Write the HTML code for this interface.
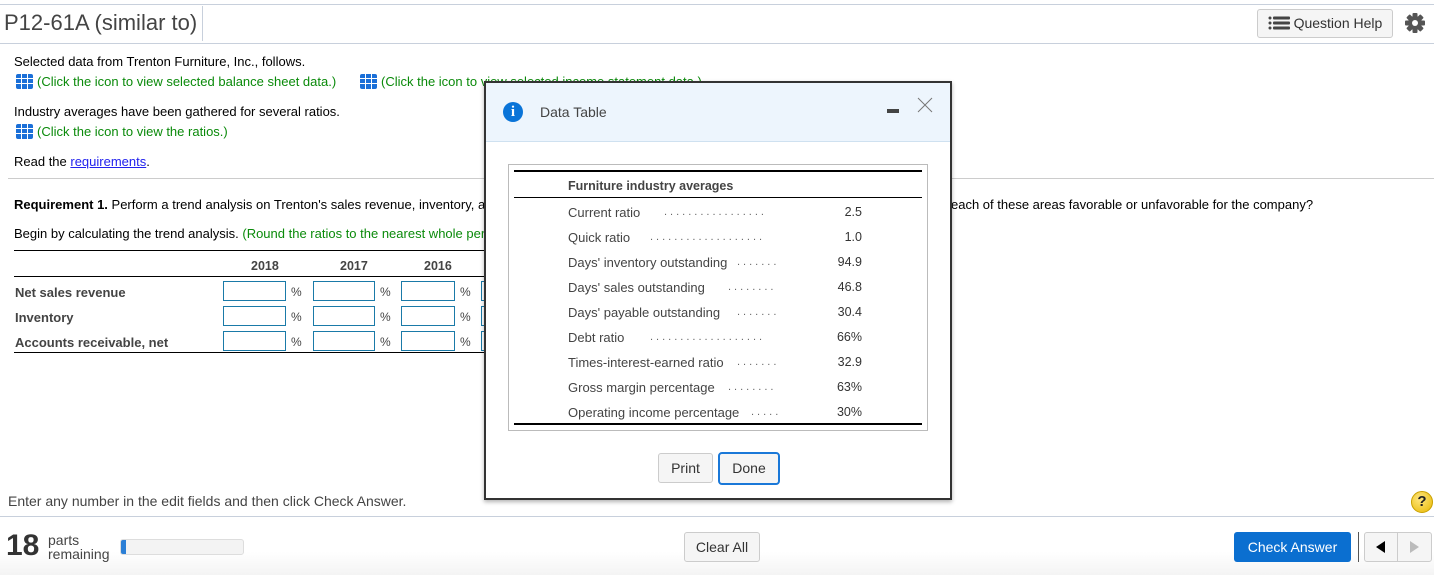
<!DOCTYPE html>
<html><head><meta charset="utf-8"><style>
*{margin:0;padding:0;box-sizing:border-box}
body{width:1434px;height:575px;overflow:hidden;background:#fff;font-family:"Liberation Sans",Arial,sans-serif;font-size:13px;color:#000;position:relative}
.a{position:absolute;white-space:nowrap}
.g{color:#0a8a0a}
.ic{display:inline-block;width:17px;height:15px;background:#1a6fd8;border-radius:2px;vertical-align:-3px;margin-right:4px;background-image:linear-gradient(90deg,transparent 5px,#fff 5px,#fff 6px,transparent 6px,transparent 11px,#fff 11px,#fff 12px,transparent 12px),linear-gradient(transparent 4px,#fff 4px,#fff 5px,transparent 5px,transparent 9px,#fff 9px,#fff 10px,transparent 10px)}
.inp{position:absolute;height:20px;border:1px solid #1a7aa8;background:#fff}
.pc{position:absolute;font-size:12px;color:#444}
.lbl{position:absolute;font-weight:bold;color:#444;font-size:13px}
.hr{position:absolute;background:#000}
.row{position:absolute;left:568px;color:#444;font-size:13px}
.dots{position:absolute;color:#666;letter-spacing:3px;font-size:11px}
.val{position:absolute;right:572px;color:#333;font-size:12.5px;text-align:right}
.btn{position:absolute;border:1px solid #ccc;border-radius:3px;background:#f5f5f5;color:#333;text-align:center;font-size:14px}
</style></head><body>
<div class="a" style="left:0;top:4px;width:1434px;height:1px;background:#c8d0dc"></div>
<div class="a" style="left:0;top:43px;width:1434px;height:1px;background:#c8d0dc"></div>
<div class="a" style="left:4px;top:10px;font-size:22px;color:#444">P12-61A (similar to)</div>
<div class="a" style="left:202px;top:6px;width:1px;height:35px;background:#c8d0dc"></div>
<div class="btn" style="left:1257px;top:9px;width:136px;height:29px;line-height:27px;font-size:14px">
<svg width="22" height="14" style="vertical-align:-2px" viewBox="0 0 22 14"><g fill="#444"><circle cx="2" cy="2" r="1.5"/><circle cx="2" cy="7" r="1.5"/><circle cx="2" cy="12" r="1.5"/><rect x="5" y="0.5" width="17" height="3" rx="1"/><rect x="5" y="5.5" width="17" height="3" rx="1"/><rect x="5" y="10.5" width="17" height="3" rx="1"/></g></svg> Question Help</div>
<svg class="a" style="left:1405px;top:13px" width="20" height="20" viewBox="0 0 20 20"><g fill="#555" transform="translate(10 10)"><rect x="-2.5" y="-10" width="5" height="20" rx="1"/><rect x="-2.5" y="-10" width="5" height="20" rx="1" transform="rotate(45)"/><rect x="-2.5" y="-10" width="5" height="20" rx="1" transform="rotate(90)"/><rect x="-2.5" y="-10" width="5" height="20" rx="1" transform="rotate(135)"/><circle r="7"/></g><circle cx="10" cy="10" r="3" fill="#fff"/></svg>

<div class="a" style="left:14px;top:54px">Selected data from Trenton Furniture, Inc., follows.</div>
<div class="a g" style="left:16px;top:74px"><span class="ic"></span>(Click the icon to view selected balance sheet data.)</div>
<div class="a g" style="left:360px;top:74px"><span class="ic"></span>(Click the icon to view selected income statement data.)</div>
<div class="a" style="left:14px;top:104px">Industry averages have been gathered for several ratios.</div>
<div class="a g" style="left:16px;top:124px"><span class="ic"></span>(Click the icon to view the ratios.)</div>
<div class="a" style="left:14px;top:154px">Read the <span style="color:#2222ee;text-decoration:underline">requirements</span>.</div>
<div class="a" style="left:8px;top:178px;width:1426px;height:1px;background:#ccc"></div>
<div class="a" style="left:14px;top:197px"><b>Requirement 1.</b> Perform a trend analysis on Trenton's sales revenue, inventory, and accounts receivable. Are the trends for</div>
<div class="a" style="left:951px;top:197px;background:#fff;padding-right:4px">each of these areas favorable or unfavorable for the company?</div>
<div class="a" style="left:14px;top:226px">Begin by calculating the trend analysis. <span class="g">(Round the ratios to the nearest whole percent.)</span></div>
<div class="hr" style="left:14px;top:250px;width:470px;height:1px"></div>
<div class="lbl" style="left:251px;top:259px;font-size:12.5px">2018</div>
<div class="lbl" style="left:340px;top:259px;font-size:12.5px">2017</div>
<div class="lbl" style="left:424px;top:259px;font-size:12.5px">2016</div>
<div class="hr" style="left:14px;top:276px;width:470px;height:1px"></div>
<div class="lbl" style="left:15px;top:285px">Net sales revenue</div>
<div class="lbl" style="left:15px;top:310px">Inventory</div>
<div class="lbl" style="left:15px;top:335px">Accounts receivable, net</div>
<div class="hr" style="left:14px;top:352px;width:470px;height:1px"></div>
<div class="inp" style="left:223px;top:281px;width:63px"></div><div class="pc" style="left:291px;top:285px">%</div>
<div class="inp" style="left:313px;top:281px;width:62px"></div><div class="pc" style="left:380px;top:285px">%</div>
<div class="inp" style="left:401px;top:281px;width:54px"></div><div class="pc" style="left:460px;top:285px">%</div>
<div class="inp" style="left:223px;top:306px;width:63px"></div><div class="pc" style="left:291px;top:310px">%</div>
<div class="inp" style="left:313px;top:306px;width:62px"></div><div class="pc" style="left:380px;top:310px">%</div>
<div class="inp" style="left:401px;top:306px;width:54px"></div><div class="pc" style="left:460px;top:310px">%</div>
<div class="inp" style="left:223px;top:331px;width:63px"></div><div class="pc" style="left:291px;top:335px">%</div>
<div class="inp" style="left:313px;top:331px;width:62px"></div><div class="pc" style="left:380px;top:335px">%</div>
<div class="inp" style="left:401px;top:331px;width:54px"></div><div class="pc" style="left:460px;top:335px">%</div>
<div class="inp" style="left:481px;top:281px;width:10px"></div>
<div class="inp" style="left:481px;top:306px;width:10px"></div>
<div class="inp" style="left:481px;top:331px;width:10px"></div>

<div class="a" style="left:8px;top:493px;color:#444;font-size:14px">Enter any number in the edit fields and then click Check Answer.</div>
<div class="a" style="left:1411px;top:491px;width:22px;height:22px;border-radius:50%;background:radial-gradient(circle at 40% 35%,#ffe680,#e8b800);border:1px solid #c9a000;text-align:center;font-weight:bold;font-size:15px;line-height:20px;color:#222">?</div>
<div class="a" style="left:0;top:516px;width:1434px;height:1px;background:#c8d0dc"></div>
<div class="a" style="left:0;top:517px;width:1434px;height:58px;background:linear-gradient(#fff,#fff 60%,#f4f4f4)"></div>
<div class="a" style="left:6px;top:529px;font-size:30px;font-weight:bold;color:#333">18</div>
<div class="a" style="left:48px;top:533px;font-size:14px;line-height:14px;color:#444">parts<br>remaining</div>
<div class="a" style="left:120px;top:539px;width:124px;height:16px;border:1px solid #ddd;border-radius:3px;background:#f3f3f3;overflow:hidden"><div style="width:5px;height:100%;background:#2b7fd6"></div></div>
<div class="btn" style="left:684px;top:532px;width:76px;height:30px;line-height:28px">Clear All</div>
<div class="a" style="left:1234px;top:532px;width:117px;height:30px;background:#0b6fd0;border-radius:3px;color:#fff;font-size:14px;text-align:center;line-height:30px">Check Answer</div>
<div class="a" style="left:1358px;top:532px;width:1px;height:30px;background:#555"></div>
<div class="btn" style="left:1364px;top:532px;width:68px;height:30px"></div>
<div class="a" style="left:1397px;top:533px;width:1px;height:28px;background:#ccc"></div>
<div class="a" style="left:1376px;top:541px;width:0;height:0;border-top:6px solid transparent;border-bottom:6px solid transparent;border-right:9px solid #000"></div>
<div class="a" style="left:1410px;top:541px;width:0;height:0;border-top:6px solid transparent;border-bottom:6px solid transparent;border-left:9px solid #bbb"></div>

<!-- modal -->
<div class="a" style="left:484px;top:81px;width:468px;height:419px;border:2px solid #333;background:#fff;box-shadow:0 2px 4px rgba(0,0,0,.3)"></div>
<div class="a" style="left:486px;top:83px;width:464px;height:59px;background:#edf5fd;border-bottom:1px solid #cfe1f0"></div>
<div class="a" style="left:503px;top:102px;width:20px;height:20px;border-radius:50%;background:#0a74d8;color:#fff;font-weight:bold;font-family:'Liberation Serif',serif;font-size:15px;text-align:center;line-height:20px">i</div>
<div class="a" style="left:540px;top:104px;font-size:14px;color:#444">Data Table</div>
<div class="a" style="left:887px;top:109px;width:12px;height:4px;background:#444"></div>
<svg class="a" style="left:917px;top:97px" width="16" height="16" viewBox="0 0 16 16"><path d="M1 1L15 15M15 1L1 15" stroke="#777" stroke-width="1"/></svg>
<div class="a" style="left:508px;top:164px;width:420px;height:267px;border:1px solid #bbb"></div>
<div class="hr" style="left:514px;top:170px;width:408px;height:2px"></div>
<div class="a" style="left:568px;top:179px;font-weight:bold;color:#444;font-size:12.5px">Furniture industry averages</div>
<div class="hr" style="left:514px;top:197px;width:408px;height:1px"></div>
<div class="row" style="top:205px">Current ratio</div><div class="dots" style="left:664px;top:206px">.................</div><div class="val" style="top:205px">2.5</div>
<div class="row" style="top:230px">Quick ratio</div><div class="dots" style="left:650px;top:231px">...................</div><div class="val" style="top:230px">1.0</div>
<div class="row" style="top:255px">Days' inventory outstanding</div><div class="dots" style="left:737px;top:256px">.......</div><div class="val" style="top:255px">94.9</div>
<div class="row" style="top:280px">Days' sales outstanding</div><div class="dots" style="left:728px;top:281px">........</div><div class="val" style="top:280px">46.8</div>
<div class="row" style="top:305px">Days' payable outstanding</div><div class="dots" style="left:737px;top:306px">.......</div><div class="val" style="top:305px">30.4</div>
<div class="row" style="top:330px">Debt ratio</div><div class="dots" style="left:650px;top:331px">...................</div><div class="val" style="top:330px">66%</div>
<div class="row" style="top:355px">Times-interest-earned ratio</div><div class="dots" style="left:737px;top:356px">.......</div><div class="val" style="top:355px">32.9</div>
<div class="row" style="top:380px">Gross margin percentage</div><div class="dots" style="left:728px;top:381px">........</div><div class="val" style="top:380px">63%</div>
<div class="row" style="top:405px">Operating income percentage</div><div class="dots" style="left:751px;top:406px">.....</div><div class="val" style="top:405px">30%</div>
<div class="hr" style="left:514px;top:423px;width:408px;height:2px"></div>
<div class="btn" style="left:658px;top:453px;width:55px;height:30px;line-height:28px">Print</div>
<div class="btn" style="left:718px;top:452px;width:62px;height:33px;line-height:29px;border:2px solid #1a78d8;border-radius:4px">Done</div>
</body></html>
